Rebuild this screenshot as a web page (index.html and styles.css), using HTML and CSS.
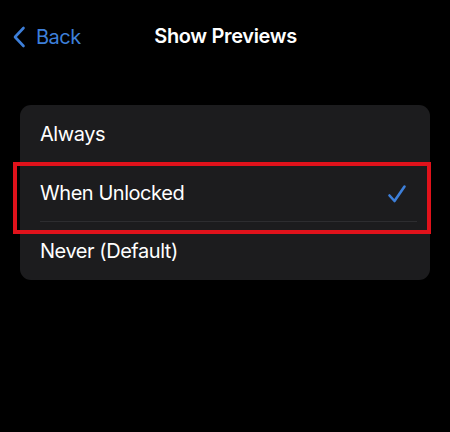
FILE: index.html
```html
<!DOCTYPE html>
<html>
<head>
<meta charset="utf-8">
<link rel="stylesheet" href="styles.css">
</head>
<body>
<div class="screen">
  <header class="nav">
    <div class="back">
      <svg class="chev" width="14" height="22" viewBox="0 0 14 22"><path d="M11.5 2 L3 11 L11.5 20" fill="none" stroke="#3d7fd9" stroke-width="2.6" stroke-linecap="round" stroke-linejoin="round"/></svg>
      <span>Back</span>
    </div>
    <div class="title">Show Previews</div>
  </header>
  <div class="card">
    <div class="row"><span>Always</span></div>
    <div class="sep"></div>
    <div class="row selected">
      <span>When Unlocked</span>
      <svg class="check" width="20" height="20" viewBox="0 0 20 20"><path d="M2.5 11.5 L7.5 17 L17.5 2.5" fill="none" stroke="#3d7fd9" stroke-width="2.6" stroke-linecap="round" stroke-linejoin="round"/></svg>
      <div class="highlight"></div>
    </div>
    <div class="sep"></div>
    <div class="row"><span>Never (Default)</span></div>
  </div>
</div>
</body>
</html>
```
FILE: styles.css
```css
html, body {
  margin: 0;
  padding: 0;
  background: #000;
}
body {
  font-family: Inter, "Noto Sans", sans-serif;
  color: #fff;
  width: 450px;
  height: 432px;
  overflow: hidden;
}
.screen {
  padding: 0 20px 0 20px;
}
.nav {
  position: relative;
  height: 72px;
  display: flex;
  align-items: center;
  justify-content: center;
}
.back {
  position: absolute;
  left: -8px;
  top: 25px;
  display: flex;
  align-items: center;
  gap: 10px;
  color: #3d7fd9;
  font-size: 20px;
  line-height: 24px;
  letter-spacing: -0.5px;
}
.chev {
  display: block;
}
.title {
  font-size: 20px;
  font-weight: 600;
  line-height: 24px;
  margin-top: -1px;
  margin-left: 1px;
  letter-spacing: -0.35px;
}
.card {
  margin-top: 33px;
  background: #1c1c1e;
  border-radius: 11px;
  height: 175px;
  display: flex;
  flex-direction: column;
}
.row {
  position: relative;
  height: 58px;
  flex: 1;
  display: flex;
  align-items: center;
  justify-content: space-between;
  padding: 0 23px 0 20px;
  font-size: 20px;
  letter-spacing: -0.45px;
}
.check {
  display: block;
  margin-top: 2px;
}
.sep {
  height: 1px;
  background: #2d2d30;
  margin: 0 13px 0 20px;
}
.highlight {
  position: absolute;
  left: -7px;
  right: -1px;
  top: -2px;
  bottom: -13px;
  border: 4.5px solid #e0121b;
  pointer-events: none;
}
```
